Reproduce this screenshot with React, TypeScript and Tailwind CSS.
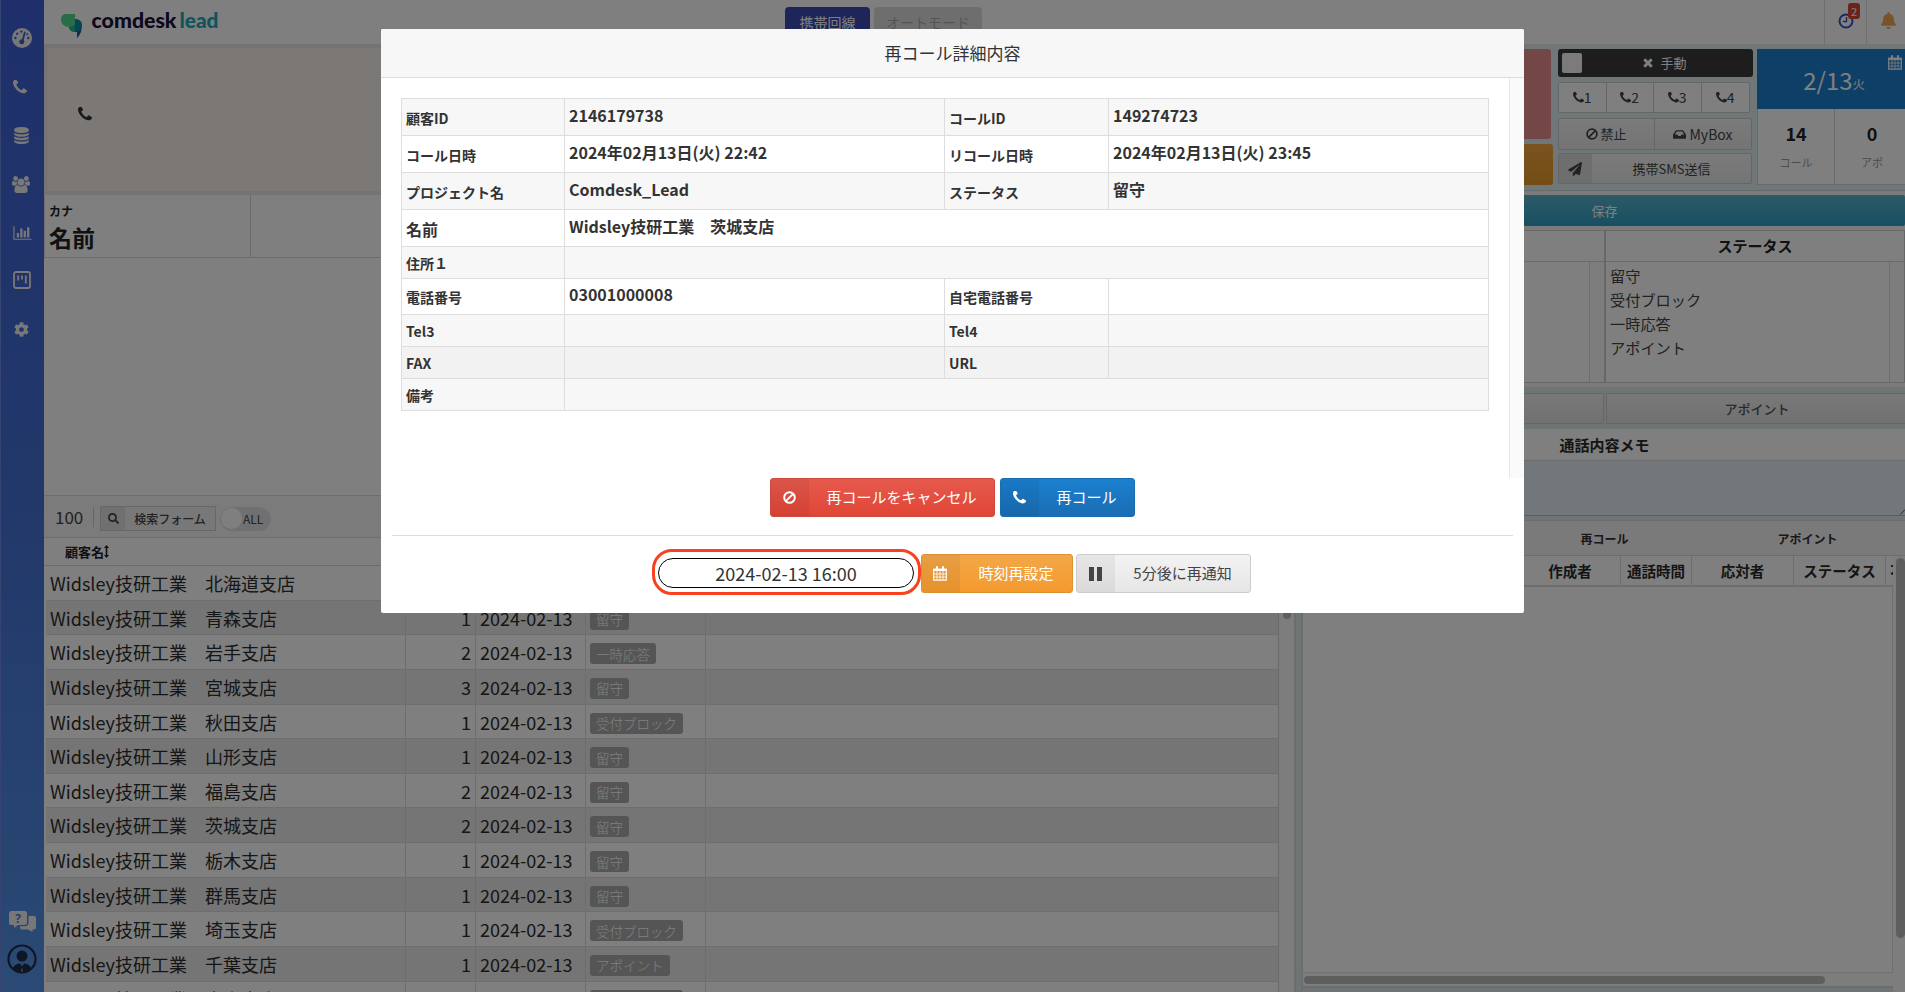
import type { ReactNode } from 'react';
import { FaBell, FaCog, FaInbox, FaPaperPlane, FaSearch } from 'react-icons/fa';

const PHONE_PATH =
  'M1600 1240q0 27-10 70.5t-21 68.5q-21 50-122 106-94 51-186 51-27 0-53-3.5t-57.5-12.5-47-14.5-55.5-20.5-49-18q-98-35-175-83-127-79-264-216t-216-264q-48-77-83-175-3-9-18-49t-20.5-55.5-14.5-47-12.5-57.5-3.5-53q0-92 51-186 56-101 106-122 25-11 68.5-21t70.5-10q14 0 21 3 18 6 53 76 11 19 30 54t35 63.5 31 53.5q3 4 17.5 25t21.5 35.5 7 28.5q0 20-28.5 50t-62 55-62 53-28.5 46q0 9 5 22.5t8.5 20.5 14 24 11.5 19q76 137 174 235t235 174q2 1 19 11.5t24 14 20.5 8.5 22.5 5q18 0 46-28.5t53-62 55-62 50-28.5q14 0 28.5 7t35.5 21.5 25 17.5q25 15 53.5 31t63.5 35 54 30q70 35 76 53 3 7 3 21z';
const DATABASE_PATH =
  'M896 768q237 0 443-43t325-127v170q0 69-103 128t-280 93.5-385 34.5-385-34.5-280-93.5-103-128v-170q119 84 325 127t443 43zm0 768q237 0 443-43t325-127v170q0 69-103 128t-280 93.5-385 34.5-385-34.5-280-93.5-103-128v-170q119 84 325 127t443 43zm0-384q237 0 443-43t325-127v170q0 69-103 128t-280 93.5-385 34.5-385-34.5-280-93.5-103-128v-170q119 84 325 127t443 43zm0-1152q208 0 385 34.5t280 93.5 103 128v128q0 69-103 128t-280 93.5-385 34.5-385-34.5-280-93.5-103-128v-128q0-69 103-128t280-93.5 385-34.5z';
const USERS_PATH =
  'M593 896q-162 5-265 128h-134q-82 0-138-40.5t-56-118.5q0-353 124-353 6 0 43.5 21t97.5 42.5 119 21.5q67 0 133-23-5 37-5 66 0 139 81 256zm1071 637q0 120-73 189.5t-194 69.5h-874q-121 0-194-69.5t-73-189.5q0-53 3.5-103.5t14-109 26.5-108.5 43-97.5 62-81 85.5-53.5 111.5-20q10 0 43 21.5t73 48 107 48 135 21.5 135-21.5 107-48 73-48 43-21.5q61 0 111.5 20t85.5 53.5 62 81 43 97.5 26.5 108.5 14 109 3.5 103.5zm-1024-1277q0 106-75 181t-181 75-181-75-75-181 75-181 181-75 181 75 75 181zm704 384q0 159-112.5 271.5t-271.5 112.5-271.5-112.5-112.5-271.5 112.5-271.5 271.5-112.5 271.5 112.5 112.5 271.5zm576 225q0 78-56 118.5t-138 40.5h-134q-103-123-265-128 81-117 81-256 0-29-5-66 66 23 133 23 59 0 119-21.5t97.5-42.5 43.5-21q124 0 124 353zm-128-609q0 106-75 181t-181 75-181-75-75-181 75-181 181-75 181 75 75 181z';
const CHART_PATH =
  'M640 896v512h-256v-512h256zm384-512v1024h-256v-1024h256zm1024 1152v128h-2048v-1536h128v1408h1920zm-640-896v768h-256v-768h256zm384-384v1152h-256v-1152h256z';

function PhoneIcon({ className }: { className?: string }) {
  return (
    <svg viewBox="192 256 1408 1408" className={className} fill="currentColor">
      <path transform="translate(0 64)" d={PHONE_PATH} />
    </svg>
  );
}

function BanIcon({ className }: { className?: string }) {
  return (
    <svg viewBox="0 0 12 12" className={className} fill="none" stroke="currentColor" strokeWidth="1.8">
      <circle cx="6" cy="6" r="4.9" />
      <path d="M2.6 9.4 9.4 2.6" />
    </svg>
  );
}

function CalendarIcon({ className }: { className?: string }) {
  return (
    <svg viewBox="0 0 14 15" className={className} fill="none" stroke="currentColor">
      <path d="M.7 3.3h12.6v10.8H.7z" strokeWidth="1.2" />
      <path d="M.7 3.9h12.6" strokeWidth="2.4" />
      <path d="M4 1v3M10 1v3" strokeWidth="2" strokeLinecap="round" />
      <path d="M4 5v9M7 5v9M10 5v9M1 8h12M1 11h12" strokeWidth=".8" />
    </svg>
  );
}

function Logo() {
  return (
    <svg width="162" height="32" viewBox="0 0 162 32">
      <path d="M6.500 5H15v18c-3.500 0-6-2-6-5.200C4.500 18.200 1 15 1 10.500 1 7 3 5 6.500 5z" fill="#4fdc8c" />
      <path d="M15 10c4.500 0 7 2.500 7 6 0 6-2 10-5 13v-6h-2z" fill="#0a8ba8" />
      <path d="M15 23c-3.500 0-6-2-6-5.200 3 0 5-1 6-2.800z" fill="#22b88c" />
      <path d="M21.500 19.500C20.500 24 19.300 26.500 17 29v-6c2-.3 3.500-1.500 4.500-3.500z" fill="#2256a8" />
      <text x="31.500" y="19" fontSize="20" fontWeight="900" fontFamily="Lato, sans-serif" fill="#161140" textLength="85" lengthAdjust="spacingAndGlyphs">comdesk</text>
      <text x="119.500" y="19" fontSize="20" fontWeight="900" fontFamily="Lato, sans-serif" fill="#1caabc" textLength="39" lengthAdjust="spacingAndGlyphs">lead</text>
    </svg>
  );
}

function Sidebar() {
  return (
    <aside className="flex h-full w-[44px] shrink-0 flex-col items-center border-l border-[#6a88e0] bg-linear-to-b from-[#3d5fd6] via-[#4470d4] to-[#5594ea] text-[#f0f0f0]">
      <div className="mt-7 mr-px flex flex-col items-center">
        <svg width="20" height="20" viewBox="0 0 20 20">
          <circle cx="10" cy="10" r="10" fill="currentColor" />
          <path d="M12.800 4.500 10.500 13" stroke="#3d5fd6" strokeWidth="1.800" strokeLinecap="round" />
          <circle cx="9.800" cy="13.700" r="2.500" fill="#3d5fd6" />
          <g fill="#3d5fd6">
            <circle cx="3.400" cy="10" r="1.200" />
            <circle cx="5.200" cy="5.700" r="1.200" />
            <circle cx="9.300" cy="3.600" r="1.200" />
            <circle cx="16.300" cy="10" r="1.200" />
            <circle cx="15.300" cy="6.300" r="1" />
          </g>
        </svg>
        <PhoneIcon className="mt-[32px] mr-1 size-[14px]" />
        <svg className="mt-[33px] mr-0.5" width="17" height="17" viewBox="0 0 1792 1792" fill="currentColor">
          <path d={DATABASE_PATH} />
        </svg>
        <svg className="mt-[32px] mr-0.5" width="18" height="17" viewBox="0 0 1920 1792" fill="currentColor">
          <path d={USERS_PATH} />
        </svg>
        <svg className="mt-[32px]" width="19" height="16" viewBox="0 0 2048 1792" fill="currentColor">
          <path d={CHART_PATH} />
        </svg>
        <svg className="mt-[30px]" width="18" height="18" viewBox="0 0 18 18" fill="none" stroke="currentColor">
          <rect x="1" y="1" width="16" height="16" rx="2" strokeWidth="1.800" />
          <path d="M5.200 4.500v5M9 4.500v4M12.800 4.500v8" strokeWidth="1.800" />
        </svg>
        <FaCog className="mt-[33px] mr-0.5 size-[15px]" />
      </div>
      <div className="mt-auto mr-px mb-[18px] flex flex-col items-center gap-[12px]">
        <svg width="27" height="21" viewBox="0 0 27 21" fill="currentColor">
          <path d="M2.500 0h13A2.500 2.500 0 0 1 18 2.500v9a2.500 2.500 0 0 1-2.500 2.500H9l-4 3v-3H2.500A2.500 2.500 0 0 1 0 11.500v-9A2.500 2.500 0 0 1 2.500 0z" />
          <path d="M19.500 5H25a2 2 0 0 1 2 2v9.500a2 2 0 0 1-2 2h-1.500V21L19 18.500h-6a2 2 0 0 1-2-2V15.300h5c2 0 3.500-1.500 3.500-3.300z" />
          <text x="9" y="11.500" textAnchor="middle" fontSize="12" fontWeight="700" fontFamily="Open Sans, sans-serif" fill="#4c80df">?</text>
        </svg>
        <svg width="30" height="30" viewBox="0 0 30 30">
          <circle cx="15" cy="15" r="13.500" fill="none" stroke="#1d2c48" strokeWidth="2.200" />
          <circle cx="15" cy="12" r="5.500" fill="#1d2c48" />
          <path d="M6 24c1-3 4-4.500 7-4.500l2 3 2-3c3 0 6 1.500 7 4.500-2 2.500-5 4.500-7.500 4.500l-1.500-5-1.500 5C11 28.500 8 26.500 6 24z" fill="#1d2c48" />
        </svg>
      </div>
    </aside>
  );
}

function Header() {
  return (
    <header className="flex h-[45px] shrink-0 border-b border-[#e8e8e8] bg-white">
      <div className="w-[741px] pt-[9px] pl-4">
        <Logo />
      </div>
      <div className="mt-[7px] flex gap-1 text-sm">
        <div className="h-[31px] w-[85px] rounded-t bg-[#3d4bb5] pt-[5px] text-center text-white">携帯回線</div>
        <div className="h-[31px] w-[108px] rounded-t bg-[#dcdcdc] pt-[5px] text-center text-[#aaa]">オートモード</div>
      </div>
      <div className="ml-auto flex">
        <div className="relative w-[42px] border-l border-[#dedede]">
          <svg className="mt-[13px] ml-[13px]" width="16" height="16" viewBox="0 0 16 16" fill="none" stroke="#3f4fc4">
            <circle cx="8" cy="8" r="6.500" strokeWidth="2" />
            <path d="M8.500 4v4.500H5" strokeWidth="1.400" />
          </svg>
          <span className="absolute top-[3px] left-[23px] flex h-4 w-[12px] items-center justify-center rounded-[3px] bg-[#d9463c] text-[11px] text-white">
            2
          </span>
        </div>
        <div className="w-[39px] border-l border-[#dedede]">
          <FaBell className="mt-3 ml-[13px] size-[17px] text-[#f0a850]" />
        </div>
      </div>
    </header>
  );
}

const customers = [
  ['北海道', 1, '留守'],
  ['青森', 1, '留守'],
  ['岩手', 2, '一時応答'],
  ['宮城', 3, '留守'],
  ['秋田', 1, '受付ブロック'],
  ['山形', 1, '留守'],
  ['福島', 2, '留守'],
  ['茨城', 2, '留守'],
  ['栃木', 1, '留守'],
  ['群馬', 1, '留守'],
  ['埼玉', 1, '受付ブロック'],
  ['千葉', 1, 'アポイント'],
  ['東京', 1, '受付ブロック'],
] as const;

function CustomerPane() {
  return (
    <section className="flex w-[1252px] shrink-0 flex-col overflow-hidden border-r-2 border-[#dadada] bg-white">
      <div className="h-[150px] shrink-0 border-t-[3px] border-b-[4px] border-l-[3px] border-[#ece6e7] bg-[#f9f0ec] pt-[59px] pl-[31px] text-[#333]">
        <PhoneIcon className="size-[14px]" />
      </div>
      <div className="flex h-[63px] shrink-0 border-b border-l border-[#dadada] text-[#222]">
        <div className="w-[206px] border-r border-[#d4d4d4] pt-[5px] pl-1 font-bold">
          <p className="text-[12px] leading-[22px]">カナ</p>
          <p className="text-[23px] leading-[30px]">名前</p>
        </div>
      </div>
      <div className="h-[237px] shrink-0" />
      <div className="flex h-[43px] shrink-0 items-center border-y border-[#dcdcdc] bg-[#f6f6f6] pl-[11px] text-[#444]">
        <span className="w-[27px] text-[17px]">100</span>
        <span className="mr-[6px] ml-[11px] h-5 w-px bg-[#ccc]" />
        <div className="mt-1 flex h-[25px] w-[116px] items-center border border-[#cfcfcf] bg-[#f0f0f0] text-[12px] font-medium">
          <span className="flex h-full w-6 items-center justify-center bg-[#e0e0e0]">
            <FaSearch className="size-[11px]" />
          </span>
          <span className="flex-1 text-center">検索フォーム</span>
        </div>
        <div className="mt-1 ml-1 flex h-6 w-[51px] items-center rounded-full bg-[#dfe1e4] p-px text-[12px]">
          <span className="mr-px size-[21px] rounded-full bg-white" />
          ALL
        </div>
      </div>
      <div className="flex h-[28px] shrink-0 items-center border-b border-[#d8d8d8] pl-[21px] text-[13px] font-bold text-[#222]">
        顧客名
        <svg width="5" height="13" viewBox="0 0 5 13" fill="currentColor">
          <path d="M2.500 0 5 3H3.300v7H5L2.500 13 0 10h1.700V3H0z" />
        </svg>
      </div>
      <div className="flex min-h-0 flex-1 pl-0.5">
        <div className="w-[1233px] border-r border-[#d2d2d2]">
          {customers.map(([name, count, status]) => (
            <div key={name} className="flex h-[34.640px] border-b border-[#dcdcdc] text-lg leading-[34px] text-[#2c2c2c] even:bg-[#ebebeb]">
              <div className="w-[360px] border-r border-[#dcdcdc] pl-1">Widsley技研工業　{name}支店</div>
              <div className="w-[70px] border-r border-[#dcdcdc] pr-1 text-right">{count}</div>
              <div className="w-[110px] border-r border-[#dcdcdc] pl-1">2024-02-13</div>
              <div className="w-[120px] border-r border-[#dcdcdc] pt-2 pl-1">
                <span className="flex h-[21px] w-fit items-center rounded-[3px] bg-[#aaa] px-[6px] text-[13.500px] font-light text-white">{status}</span>
              </div>
            </div>
          ))}
        </div>
        <div className="flex flex-1 justify-center bg-[#fafafa]">
          <span className="h-[53px] w-2 rounded-full bg-[#bdbdbd]" />
        </div>
      </div>
    </section>
  );
}

function ControlPanel() {
  return (
    <div className="flex h-[146px] shrink-0 justify-end border-b border-[#cbd5d8] bg-[#dfeef3] pt-[4px] text-[#444]">
      <div className="mr-[5px] flex w-[130px] flex-col gap-[5px]">
        <div className="mr-0.5 h-[90px] rounded-[3px] bg-[#e48e8a]" />
        <div className="h-[41px] rounded-[3px] bg-linear-to-b from-[#f4a83f] to-[#e89a28]" />
      </div>
      <div className="mr-1 w-[195px]">
        <div className="flex h-[28px] items-center rounded-[3px] bg-[#3a3a3a] px-1 text-[13px] text-white">
          <span className="size-5 rounded-[2px] bg-[#f6f6f6]" />
          <span className="flex flex-1 items-center justify-center gap-[7px] pr-[1px] pb-px">
            <svg width="10" height="10" viewBox="0 0 10 10" stroke="currentColor" strokeWidth="3">
              <path d="M1.300 1.300 8.700 8.700M8.700 1.300 1.300 8.700" />
            </svg>
            手動
          </span>
        </div>
        <div className="mt-[5px] grid h-[31px] w-[192px] grid-cols-4 divide-x divide-[#ccc] rounded-[2px] border border-[#ccc] bg-white text-[14px]">
          {[1, 2, 3, 4].map((n) => (
            <span key={n} className="flex items-center justify-center">
              <PhoneIcon className="size-[11px]" />
              {n}
            </span>
          ))}
        </div>
        <div className="mt-[5px] grid h-[32px] w-[194px] grid-cols-2 divide-x divide-[#ccc] rounded-[2px] border border-[#ccc] bg-linear-to-b from-[#f6f6f6] to-[#e9e9e9] text-[14px]">
          <span className="flex items-center justify-center gap-0.5 text-[13px]">
            <BanIcon className="size-3" />
            禁止
          </span>
          <span className="flex items-center justify-center gap-[3px]">
            <FaInbox className="size-[13px]" />
            MyBox
          </span>
        </div>
        <div className="mt-[3px] flex h-[31px] w-[194px] rounded-[2px] border border-[#ccc] bg-linear-to-b from-[#f6f6f6] to-[#e9e9e9] text-[13px]">
          <span className="flex w-[33px] items-center justify-center bg-[#dcdcdc] pr-px">
            <FaPaperPlane className="size-[14px]" />
          </span>
          <span className="flex flex-1 items-center justify-center">携帯SMS送信</span>
        </div>
      </div>
      <div className="w-[148px]">
        <div className="relative h-[60px] bg-[#1b7ece] text-white">
          <p className="flex h-full items-center justify-center pt-0.5 pl-[6px] text-[24px] leading-none">
            2/13<span className="pt-[8px] text-[12px]">火</span>
          </p>
          <CalendarIcon className="absolute top-[6px] right-[3px] h-[15px] w-[14px]" />
        </div>
        <div className="flex h-[76px] border-b border-l border-[#d4d4d4] bg-white text-center">
          <div className="w-[77px] shrink-0 border-r border-[#d4d4d4] pt-3">
            <p className="text-lg leading-6 font-bold text-[#222]">14</p>
            <p className="mt-[9px] text-[11px] leading-4 text-[#999]">コール</p>
          </div>
          <div className="w-[74px] shrink-0 pt-3">
            <p className="text-lg leading-6 font-bold text-[#222]">0</p>
            <p className="mt-[9px] text-[11px] leading-4 text-[#999]">アポ</p>
          </div>
        </div>
      </div>
    </div>
  );
}

function CallPane() {
  return (
    <section className="flex w-[609px] shrink-0 flex-col bg-[#dfeaea]">
      <ControlPanel />
      <div className="h-[196px] shrink-0 bg-[#f6f6f6] pt-1">
        <div className="flex h-[31px] items-center justify-center rounded-[2px] bg-linear-to-b from-[#58b4ce] to-[#2f9fc2] pl-2 text-[13px] text-white">保存</div>
        <div className="mt-[4px] flex h-[153px] border-y border-[#d0d0d0] bg-white text-[15px]">
          <div className="w-[310px] shrink-0 border-r-2 border-[#cfcfd4]">
            <div className="h-[31px] border-b border-[#d4d4d4]" />
            <div className="ml-auto h-[120px] w-[15px] border-l border-[#ddd] bg-[#fafafa]" />
          </div>
          <div className="flex-1 border-r border-[#ccc]">
            <div className="flex h-[31px] items-center justify-center border-b border-[#d4d4d4] font-bold text-[#222]">ステータス</div>
            <div className="flex h-[120px]">
              <div className="flex-1 pt-px pl-1 text-[15.200px] leading-6 text-[#444]">
                <p>留守</p>
                <p>受付ブロック</p>
                <p>一時応答</p>
                <p>アポイント</p>
              </div>
              <div className="w-[15px] border-l border-[#ddd] bg-[#fafafa]" />
            </div>
          </div>
        </div>
      </div>
      <div className="mt-[6px] flex h-[31px] shrink-0 gap-[2px] text-[13px] font-medium text-[#555]">
        <div className="w-[308px] border border-[#ccc] bg-linear-to-b from-[#f2f2f2] to-[#e2e2e2]" />
        <div className="flex flex-1 items-center justify-center border border-r-0 border-[#ccc] bg-linear-to-b from-[#f2f2f2] to-[#e2e2e2] pl-0.5">アポイント</div>
      </div>
      <div className="mt-[5px] flex h-8 shrink-0 items-center justify-center border-b border-[#d4d8da] bg-white pt-0.5 pl-[8px] text-[15px] font-bold text-[#2a2a2a]">通話内容メモ</div>
      <div className="flex h-[55px] shrink-0 items-end justify-end border-b border-[#bbb] bg-[#e3eff5]">
        <svg width="5" height="6" viewBox="0 0 5 6" stroke="#555">
          <path d="M.5 5.500 5 .5" />
        </svg>
      </div>
      <div className="mt-[4px] flex h-[36px] shrink-0 items-center border-y border-[#d8d8d8] bg-[#f5f5f5] pt-px text-center text-[12px] font-bold text-[#333]">
        <div className="w-[203px]" />
        <div className="w-[211px]">再コール</div>
        <div className="w-[195px]">アポイント</div>
      </div>
      <div className="flex min-h-0 flex-1 pl-[5px]">
        <div className="flex w-[592px] shrink-0 flex-col border-l-2 border-[#dcdcdc] bg-white">
          <div className="flex h-[31px] shrink-0 overflow-hidden border-b-2 border-[#dadada] text-center text-[14.500px] leading-[30px] font-bold text-[#2a2a2a]">
            <div className="w-[217px] shrink-0 border-r border-[#dcdcdc]" />
            <div className="w-[101px] shrink-0 border-r border-[#dcdcdc]">作成者</div>
            <div className="w-[71px] shrink-0 border-r border-[#dcdcdc]">通話時間</div>
            <div className="w-[102px] shrink-0 border-r border-[#dcdcdc]">応対者</div>
            <div className="w-[92px] shrink-0 border-r border-[#dcdcdc]">ステータス</div>
            <div className="w-[7px] shrink-0 overflow-hidden pl-[4px] whitespace-nowrap">不在</div>
          </div>
          <div className="flex-1 border-r border-b border-[#e0e0e0]" />
          <div className="flex h-[15px] shrink-0 items-center border-b-2 border-[#dadada] bg-[#fafafa] pl-px">
            <span className="h-2 w-[521px] rounded-full bg-[#bdbdbd]" />
          </div>
          <div className="h-[4px] shrink-0 bg-[#dfeaee]" />
        </div>
        <div className="flex-1 bg-[#fafafa] pt-[2px] pl-[3px]">
          <div className="h-[380px] w-[9px] rounded-full bg-[#bdbdbd]" />
        </div>
      </div>
    </section>
  );
}

type DetailRow = {
  height: string;
  bg: string;
  label: string;
  value?: string;
  label2?: string;
  value2?: string;
  large?: boolean;
};

const details: DetailRow[] = [
  { height: 'h-[37px]', bg: 'bg-[#f7f7f7]', label: '顧客ID', value: '2146179738', label2: 'コールID', value2: '149274723' },
  { height: 'h-[37px]', bg: 'bg-white', label: 'コール日時', value: '2024年02月13日(火) 22:42', label2: 'リコール日時', value2: '2024年02月13日(火) 23:45' },
  { height: 'h-[37px]', bg: 'bg-[#f7f7f7]', label: 'プロジェクト名', value: 'Comdesk_Lead', label2: 'ステータス', value2: '留守' },
  { height: 'h-[37px]', bg: 'bg-white', label: '名前', value: 'Widsley技研工業　茨城支店', large: true },
  { height: 'h-[32px]', bg: 'bg-[#f7f7f7]', label: '住所１' },
  { height: 'h-[36px]', bg: 'bg-white', label: '電話番号', value: '03001000008', label2: '自宅電話番号' },
  { height: 'h-[32px]', bg: 'bg-[#f7f7f7]', label: 'Tel3', label2: 'Tel4' },
  { height: 'h-[32px]', bg: 'bg-[#f2f2f2]', label: 'FAX', label2: 'URL' },
  { height: 'h-[32px]', bg: 'bg-[#f7f7f7]', label: '備考' },
];

function DetailTable() {
  return (
    <div className="w-[1088px] border-t border-l border-[#ddd] font-bold text-[#333]">
      {details.map((row) => (
        <div key={row.label} className={`flex ${row.height} ${row.bg} border-b border-[#ddd]`}>
          <div className={`flex w-[163px] items-center border-r border-[#ddd] pt-px pl-1 ${row.large ? 'text-base' : 'text-sm'}`}>{row.label}</div>
          <div className={`flex items-center border-r border-[#ddd] pb-[5px] pl-1 text-base ${row.label2 ? 'w-[380px]' : 'flex-1'}`}>{row.value}</div>
          {row.label2 && (
            <>
              <div className="flex w-[164px] items-center border-r border-[#ddd] pt-px pl-1 text-sm">{row.label2}</div>
              <div className="flex flex-1 items-center border-r border-[#ddd] pb-[5px] pl-1 text-base">{row.value2}</div>
            </>
          )}
        </div>
      ))}
    </div>
  );
}

function LabeledButton({ icon, className, children }: { icon: ReactNode; className: string; children: ReactNode }) {
  return (
    <button className={`flex h-[39px] overflow-hidden rounded-[3px] border text-[15px] ${className}`}>
      <span className="flex h-full w-[38px] items-center justify-center bg-black/5 pr-0.5">{icon}</span>
      <span className="flex h-full flex-1 items-center justify-center">{children}</span>
    </button>
  );
}

function RecallModal() {
  return (
    <div className="absolute top-[29px] left-[381px] flex h-[584px] w-[1143px] flex-col overflow-hidden rounded-[2px] bg-white">
      <div className="flex h-[49px] shrink-0 items-center justify-center border-b border-[#ddd] bg-[#f7f7f7] text-[17px] text-[#333]">再コール詳細内容</div>
      <div className="flex h-[400px] shrink-0">
        <div className="flex-1 pt-5 pl-5">
          <DetailTable />
        </div>
        <div className="w-[15px] border-l border-[#e8e8e8] bg-[#fafafa]" />
      </div>
      <div className="flex shrink-0 justify-center gap-[5px]">
        <LabeledButton icon={<BanIcon className="size-[13px]" />} className="w-[225px] border-[#cf4a3e] bg-linear-to-b from-[#e65a4d] to-[#e04535] text-white">
          再コールをキャンセル
        </LabeledButton>
        <LabeledButton icon={<PhoneIcon className="size-[13px]" />} className="w-[135px] border-[#1a6db0] bg-linear-to-b from-[#1b80d0] to-[#1a6db3] text-white">
          再コール
        </LabeledButton>
      </div>
      <div className="mx-[11px] mt-[18px] h-px bg-[#ddd]" />
      <div className="mt-[13px] flex pl-[271px]">
        <div className="h-[46px] w-[269px] rounded-[20px] border-[3px] border-[#f9401f] px-[3px] py-[6px]">
          <div className="flex h-[30px] w-[256px] items-center justify-center rounded-[15px] border border-black bg-white text-lg text-[#333]">2024-02-13 16:00</div>
        </div>
        <LabeledButton icon={<CalendarIcon className="h-[15px] w-[14px]" />} className="mt-[5px] w-[152px] border-[#dd8f33] bg-linear-to-b from-[#f3a748] to-[#f49a2d] text-white">
          時刻再設定
        </LabeledButton>
        <LabeledButton
          icon={
            <svg width="13" height="14" viewBox="0 0 13 14" fill="currentColor">
              <path d="M0 0h5v14H0zM8 0h5v14H8z" />
            </svg>
          }
          className="mt-[5px] ml-[3px] w-[175px] border-[#ccc] bg-linear-to-b from-[#f3f3f3] to-[#e6e6e6] text-[#444]"
        >
          5分後に再通知
        </LabeledButton>
      </div>
    </div>
  );
}

export default function App() {
  return (
    <div className="relative flex h-[992px] w-[1905px] overflow-hidden bg-white font-['Noto_Sans_CJK_JP',sans-serif]">
      <Sidebar />
      <div className="flex min-w-0 flex-1 flex-col">
        <Header />
        <main className="flex min-h-0 flex-1">
          <CustomerPane />
          <CallPane />
        </main>
      </div>
      <div className="absolute inset-0 bg-black/50" />
      <RecallModal />
    </div>
  );
}
